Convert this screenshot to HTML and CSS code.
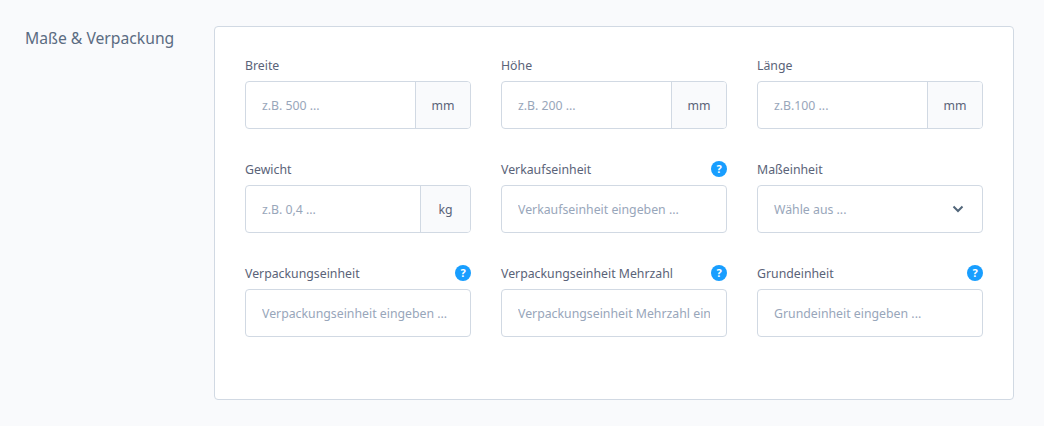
FILE: index.html
```html
<!DOCTYPE html>
<html lang="de">
<head>
<meta charset="utf-8">
<title>Maße &amp; Verpackung</title>
<link rel="stylesheet" href="styles.css">
</head>
<body>
<section class="section">
  <h2 class="title">Maße &amp; Verpackung</h2>
  <div class="card">
    <div class="grid">
      <div class="field">
        <div class="label-row"><label>Breite</label></div>
        <div class="control"><input placeholder="z.B. 500 ..."><span class="addon">mm</span></div>
      </div>
      <div class="field">
        <div class="label-row"><label>Höhe</label></div>
        <div class="control"><input placeholder="z.B. 200 ..."><span class="addon">mm</span></div>
      </div>
      <div class="field">
        <div class="label-row"><label>Länge</label></div>
        <div class="control"><input placeholder="z.B.100 ..."><span class="addon">mm</span></div>
      </div>
      <div class="field">
        <div class="label-row"><label>Gewicht</label></div>
        <div class="control"><input placeholder="z.B. 0,4 ..."><span class="addon addon-kg">kg</span></div>
      </div>
      <div class="field">
        <div class="label-row"><label>Verkaufseinheit</label><span class="help">?</span></div>
        <div class="control"><input placeholder="Verkaufseinheit eingeben ..."></div>
      </div>
      <div class="field">
        <div class="label-row"><label>Maßeinheit</label></div>
        <div class="control select"><span class="select-text">Wähle aus ...</span>
          <svg class="chevron" width="12" height="8" viewBox="0 0 12 8"><path d="M1.5 1.5 6 6l4.5-4.5" fill="none" stroke="#52667a" stroke-width="2"/></svg>
        </div>
      </div>
      <div class="field">
        <div class="label-row"><label>Verpackungseinheit</label><span class="help">?</span></div>
        <div class="control"><input placeholder="Verpackungseinheit eingeben ..."></div>
      </div>
      <div class="field">
        <div class="label-row"><label>Verpackungseinheit Mehrzahl</label><span class="help">?</span></div>
        <div class="control"><input placeholder="Verpackungseinheit Mehrzahl eingeben ..."></div>
      </div>
      <div class="field">
        <div class="label-row"><label>Grundeinheit</label><span class="help">?</span></div>
        <div class="control"><input placeholder="Grundeinheit eingeben ..."></div>
      </div>
    </div>
  </div>
</section>
</body>
</html>
```
FILE: styles.css
```css
* { box-sizing: border-box; }
html, body { margin: 0; height: 100%; }
body {
  background: #f9fafc;
  font-family: "Noto Sans", "Open Sans", sans-serif;
  color: #52667a;
  overflow: hidden;
}
.section {
  display: flex;
  align-items: flex-start;
  padding: 26px 30px 0 25px;
}
.title {
  width: 189px;
  flex: none;
  margin: 0;
  font-size: 15.7px;
  line-height: 24px;
  font-weight: 400;
  color: #5b6c82;
}
.card {
  width: 800px;
  height: 374px;
  background: #fff;
  border: 1px solid #d1d9e3;
  border-radius: 4px;
  padding: 26px 30px 0;
}
.grid {
  display: grid;
  grid-template-columns: repeat(3, 226px);
  column-gap: 30px;
  row-gap: 28px;
}
.label-row {
  display: flex;
  justify-content: space-between;
  align-items: center;
  height: 24px;
  margin-bottom: 4px;
}
label {
  font-size: 12.3px;
  line-height: 24px;
  padding-top: 2px;
  color: #5a6378;
}
.help {
  width: 16px;
  height: 16px;
  border-radius: 50%;
  background: #189eff;
  color: #fff;
  font-size: 11px;
  font-weight: 700;
  line-height: 16px;
  text-align: center;
}
.control {
  display: flex;
  height: 48px;
  border: 1px solid #d1d9e3;
  border-radius: 4px;
  overflow: hidden;
  background: #fff;
}
input {
  flex: 1;
  min-width: 0;
  border: 0;
  outline: 0;
  padding: 0 16px;
  font: 12.3px "Noto Sans", "Open Sans", sans-serif;
  color: #52667a;
  background: transparent;
}
input::placeholder { color: #98a6ba; opacity: 1; }
.addon {
  flex: none;
  width: 55px;
  display: flex;
  align-items: center;
  justify-content: center;
  border-left: 1px solid #d1d9e3;
  background: #f9fafc;
  font-size: 12.3px;
  color: #5a6378;
}
.addon-kg { width: 50px; }
.select {
  align-items: center;
  justify-content: space-between;
  padding: 0 18px 0 16px;
}
.select-text { font-size: 12.3px; color: #98a6ba; }
.chevron { display: block; }
```
